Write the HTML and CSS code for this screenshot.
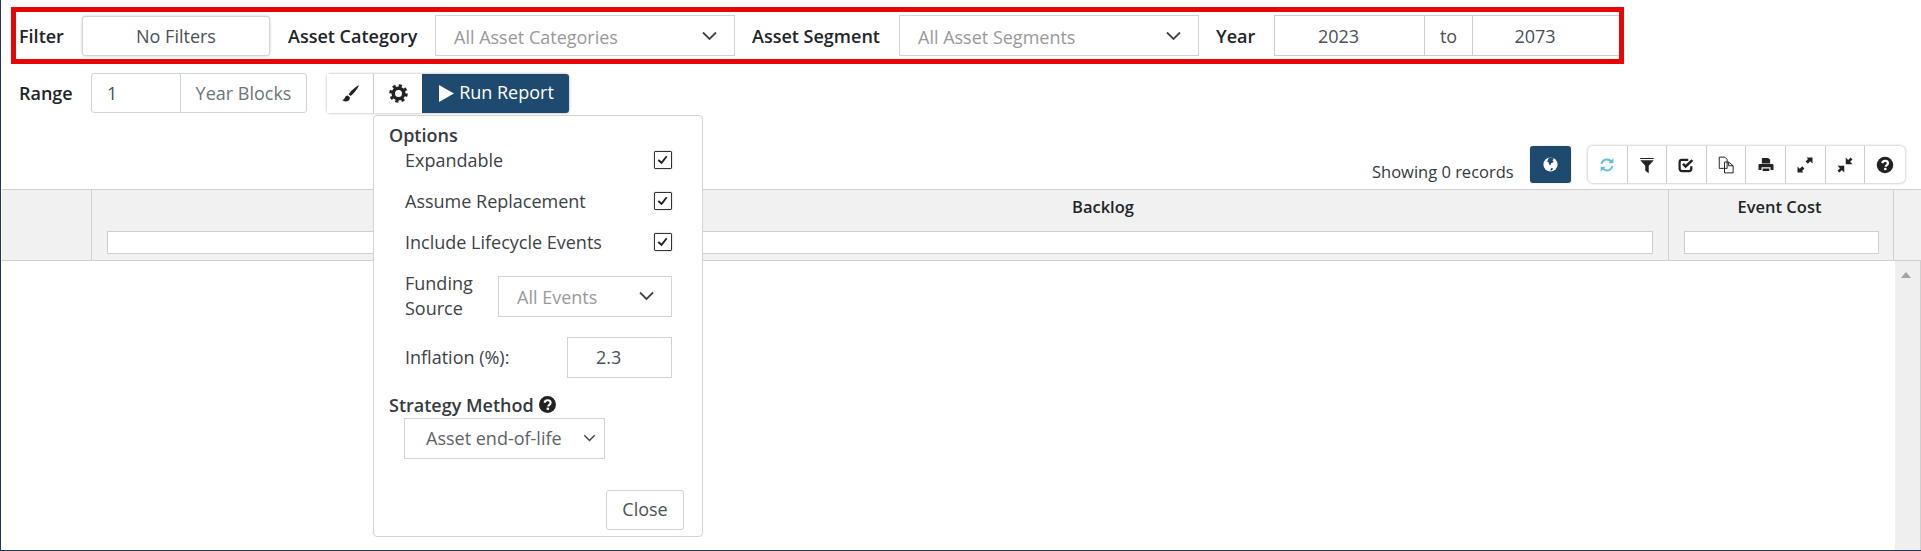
FILE: index.html
```html
<!DOCTYPE html>
<html lang="en">
<head>
<meta charset="utf-8">
<title>Report</title>
<link rel="stylesheet" href="styles.css">
</head>
<body>
<div class="page">
  <div class="filterbar">
    <span class="lbl lbl-filter">Filter</span>
    <button class="btn-filter">No Filters</button>
    <span class="lbl lbl-cat">Asset Category</span>
    <div class="select sel-wide"><span>All Asset Categories</span><svg class="chev" viewBox="0 0 16 10"><path d="M1.5 1.5 8 8l6.5-6.5"/></svg></div>
    <span class="lbl lbl-seg">Asset Segment</span>
    <div class="select sel-wide"><span>All Asset Segments</span><svg class="chev" viewBox="0 0 16 10"><path d="M1.5 1.5 8 8l6.5-6.5"/></svg></div>
    <span class="lbl lbl-year">Year</span>
    <div class="yeargroup">
      <div class="yearcell year-a">2023</div>
      <div class="yearcell year-to">to</div>
      <div class="yearcell year-b">2073</div>
    </div>
  </div>

  <div class="rangebar">
    <span class="lbl lbl-range">Range</span>
    <div class="rangegroup">
      <div class="rangeval">1</div>
      <div class="rangeunit">Year Blocks</div>
    </div>
    <div class="tools">
      <button class="tool tool-brush"><svg class="ico" viewBox="0 0 24 24"><path d="M21.500 2.500C19 3 12.500 9 9.800 12.800l2.300 2.100C15.500 12 21.500 5.200 21.500 2.500ZM8.600 14.200c-2.600.2-3 2.200-3.500 3.600-.3 1-1.400 1.500-2.600 1.600 1.600 1.800 5 2.200 7.200.8 1.600-1.100 2-3 1.300-4.200Z"/></svg></button>
      <button class="tool tool-cog"><svg class="ico" viewBox="0 0 24 24"><circle class="cog-ring" cx="12" cy="12" r="6"/><circle class="cog-teeth" cx="12" cy="12" r="8.600"/></svg></button>
      <button class="run"><svg class="play" viewBox="0 0 14 16"><path d="M0 0l14 8-14 8z"/></svg>Run Report</button>

      <div class="popup">
        <div class="pop-title">Options</div>
        <div class="check-row"><span>Expandable</span><span class="check"><svg viewBox="0 0 16 16"><path d="M3.500 8.500 7 11.500l5.500-7"/></svg></span></div>
        <div class="check-row"><span>Assume Replacement</span><span class="check"><svg viewBox="0 0 16 16"><path d="M3.500 8.500 7 11.500l5.500-7"/></svg></span></div>
        <div class="check-row"><span>Include Lifecycle Events</span><span class="check"><svg viewBox="0 0 16 16"><path d="M3.500 8.500 7 11.500l5.500-7"/></svg></span></div>
        <div class="fund-row">
          <span class="fund-lbl">Funding Source</span>
          <div class="select sel-fund"><span>All Events</span><svg class="chev" viewBox="0 0 16 10"><path d="M1.500 1.500 8 8l6.500-6.500"/></svg></div>
        </div>
        <div class="infl-row">
          <span>Inflation (%):</span>
          <div class="infl-input">2.3</div>
        </div>
        <div class="pop-title strat">Strategy Method
          <svg class="qmark" viewBox="0 0 24 24"><circle cx="12" cy="12" r="12"/><path class="qm" d="M7.800 9.500C8.300 7.200 10 6 12.200 6c2.400 0 4.200 1.500 4.200 3.600 0 3-3.300 3-3.300 5.200"/><rect class="qd" x="10.800" y="16.400" width="3.400" height="3.200"/></svg>
        </div>
        <div class="strat-sel"><span>Asset end-of-life</span><svg class="chev small" viewBox="0 0 16 10"><path d="M1.500 1.500 8 8l6.500-6.500"/></svg></div>
        <div class="pop-foot"><button class="close">Close</button></div>
      </div>
    </div>
  </div>

  <div class="statusbar">
    <span class="records">Showing 0 records</span>
    <button class="globe"><svg class="ico" viewBox="0 0 24 24"><circle class="globe-disc" cx="12" cy="12" r="10"/><path class="globe-land" d="M10 2.500h5.500l1 2-2 1.500 2 1.500-2 2.500H13l-1 3-2-1-.5-3-2-1 1-3.500ZM13 17l3 .5-2.500 2.800-2-.3Z"/></svg></button>
    <div class="toolbar">
      <button class="tb"><svg class="ico" viewBox="0 0 24 24"><path class="refresh" d="M4.800 10.500C5.800 6.700 8.800 4.700 12 4.700c2.300 0 4.200 1 5.700 2.500M19.200 13.500c-1 3.800-4 5.800-7.200 5.800-2.300 0-4.200-1-5.700-2.500"/><path class="refresh-fill" d="M20.500 3v6.800h-6.800ZM3.500 21v-6.800h6.800Z"/></svg></button>
      <button class="tb"><svg class="ico" viewBox="0 0 24 24"><path d="M3 2.500h18V4H3ZM3 5.500h18L14.300 13v10l-4.600-3.500V13Z"/></svg></button>
      <button class="tb"><svg class="ico" viewBox="0 0 24 24"><path class="tb-line" d="M19 13.500V17a3 3 0 0 1-3 3H6.500a3 3 0 0 1-3-3V8a3 3 0 0 1 3-3H15"/><path class="tb-check" d="M8 10.500l3.500 3.500 9-8.500"/></svg></button>
      <button class="tb"><svg class="ico" viewBox="0 0 24 24"><path class="tb-thin" d="M3 1.500h7.500l3 3v12H3ZM10 8h5.500l6 5v9.500H10V8M15.500 8v5h6"/></svg></button>
      <button class="tb"><svg class="ico" viewBox="0 0 24 24"><path d="M7 2.500h8l2.500 2.500v5H6.500V3ZM3.500 10.500h17A1.500 1.500 0 0 1 22 12v6.500h-4V15H6v3.500H2V12a1.500 1.500 0 0 1 1.500-1.500ZM7.500 16.500h9V20h-9Z"/></svg></button>
      <button class="tb"><svg class="ico" viewBox="0 0 24 24"><path d="M14 2h8v8l-3-3-3.200 3.200-3-3L16 4ZM10 22H2v-8l3 3 3.200-3.200 3 3L8 20Z"/></svg></button>
      <button class="tb"><svg class="ico" viewBox="0 0 24 24"><path d="M22 11h-9V2l3.200 3.200L19.500 2l2.500 2.500L18.800 7.800ZM2 13h9v9l-3.200-3.200L4.500 22 2 19.500l3.300-3.300Z"/></svg></button>
      <button class="tb"><svg class="ico" viewBox="0 0 24 24"><circle cx="12" cy="12" r="11"/><path class="qm" d="M8.300 9.500C8.800 7.500 10.200 6.500 12.200 6.500c2.100 0 3.700 1.300 3.700 3.100 0 2.700-2.900 2.600-2.900 4.800"/><rect class="qd" x="10.800" y="15.800" width="3.200" height="3"/></svg></button>
    </div>
  </div>

  <div class="thead">
    <div class="th"></div>
    <div class="th"><div class="th-title"></div><div class="th-input"></div></div>
    <div class="th"><div class="th-title">Backlog</div><div class="th-input"></div></div>
    <div class="th th-cost"><div class="th-title">Event Cost</div><div class="th-input"></div></div>
    <div class="th th-end"></div>
  </div>
  <div class="tbody">
    <div class="scroll"><span class="scroll-up"></span></div>
  </div>
</div>
</body>
</html>
```
FILE: styles.css
```css
* { box-sizing: border-box; }
html, body { margin: 0; padding: 0; background: #fff; }
body { font-family: "Open Sans", sans-serif; font-size: 18px; color: #212529; }
button { font: inherit; cursor: pointer; }

.page {
  height: 551px;
  display: flex;
  flex-direction: column;
  border-left: 1px solid #1c3a5e;
  border-bottom: 1px solid #1c3a5e;
  overflow: hidden;
}

.lbl { font-weight: 600; color: #212529; white-space: nowrap; }

.filterbar {
  margin: 7px 0 0 10px;
  width: 1613px;
  height: 57px;
  flex: none;
  border: 5px solid #e60606;
  padding: 0 0 0 4px;
  display: flex;
  align-items: center;
  overflow: hidden;
}
.filterbar > * { flex: none; }
.lbl-filter { width: 62px; margin-left: -1px; margin-right: 1px; }
.btn-filter {
  width: 188px; height: 40px;
  background: #fff;
  border: 1px solid #ced4da;
  border-radius: 3px;
  box-shadow: 0 0 3px rgba(0,0,0,.2);
  color: #495057;
  padding: 0;
}
.lbl-cat { margin-left: 18px; width: 147px; }
.lbl-seg { margin-left: 17px; width: 147px; }
.lbl-year { margin-left: 17px; width: 58px; }

.select {
  display: flex; align-items: center; justify-content: space-between;
  height: 41px;
  border: 1px solid #ced4da;
  color: #999;
  background: #fff;
}
.select span { padding-top: 2px; }
.sel-wide { width: 300px; padding: 0 16px 0 18px; }
.chev { width: 17px; height: 10px; fill: none; stroke: #444; stroke-width: 1.8; }
.chev.small { width: 13px; height: 8px; }

.yeargroup { display: flex; height: 41px; border-top: 1px solid #ccc; border-bottom: 1px solid #ccc; }
.yearcell { display: flex; align-items: center; justify-content: center; color: #495057; }
.year-a { width: 150px; padding-right: 22px; border-left: 1px solid #ccc; }
.year-to { width: 49px; border-left: 1px solid #ccc; border-right: 1px solid #ccc; }
.year-b { width: 146px; padding-right: 22px; }

.rangebar { display: flex; align-items: center; margin: 9px 0 0 19px; height: 40px; flex: none; }
.lbl-range { width: 71px; margin-left: -1px; margin-right: 1px; }
.rangegroup {
  display: flex; width: 216px; height: 40px;
  border: 1px solid #ced4da; border-radius: 3px;
  color: #495057;
}
.rangeval { width: 89px; padding-left: 15px; display: flex; align-items: center; border-right: 1px solid #ced4da; }
.rangeunit { flex: 1; display: flex; align-items: center; justify-content: center; color: #6c757d; }

.tools {
  position: relative;
  display: flex;
  margin-left: 20px;
  height: 39px;
  border-radius: 3px;
  box-shadow: 0 0 3px rgba(0,0,0,.35);
}
.tool {
  width: 47px; height: 39px; padding: 0;
  background: #fff; border: 0; border-right: 1px solid #ccc;
  display: flex; align-items: center; justify-content: center;
}
.tool-cog { width: 48px; border-right: 0; }
.ico { width: 18px; height: 18px; fill: #222; display: block; }
.tool .ico { width: 21px; height: 21px; }
.cog-ring { fill: none; stroke: #222; stroke-width: 4; }
.cog-teeth { fill: none; stroke: #222; stroke-width: 4; stroke-dasharray: 3.4 3.35; }
.run {
  width: 147px; height: 39px; padding: 0 0 2px 2px;
  background: #1f4a70; border: 0; border-radius: 0 3px 3px 0;
  color: #fff;
  display: flex; align-items: center; justify-content: center;
}
.play { width: 15px; height: 17px; fill: #fff; margin: 2px 5px 0 0; }

.popup {
  position: absolute;
  left: 46px; top: 41px;
  width: 330px; height: 422px;
  background: #fff;
  border: 1px solid #d4d4d4;
  border-radius: 4px;
  padding: 8px 17px 0 15px;
  color: #3c4248;
  z-index: 5;
}
.pop-title { font-weight: 600; color: #343a40; line-height: 22px; }
.check-row {
  display: flex; align-items: center; justify-content: space-between;
  height: 18px;
  margin: 0 13px 23px 16px;
}
.pop-title + .check-row { margin-top: 5px; }
.check {
  width: 18px; height: 18px; border: 1.5px solid #333; border-radius: 1px;
  box-shadow: 0 0 2px rgba(0,0,0,.3);
  display: block;
}
.check svg { display: block; width: 15px; height: 15px; fill: none; stroke: #222; stroke-width: 2; }
.fund-row { display: flex; align-items: center; margin: -3px 13px 0 16px; height: 51px; justify-content: space-between; }
.fund-lbl { width: 80px; line-height: 25px; }
.sel-fund { width: 174px; padding: 0 16px 0 18px; }
.infl-row { display: flex; align-items: center; justify-content: space-between; margin: 15px 13px 0 16px; height: 41px; }
.infl-input {
  width: 105px; height: 41px; padding-left: 28px;
  border: 1px solid #ced4da;
  display: flex; align-items: center;
  color: #495057;
}
.strat { margin-top: 16px; display: flex; align-items: center; }
.qmark { width: 17px; height: 17px; fill: #222; margin-left: 5px; }
.qm { fill: none; stroke: #fff; stroke-width: 3; }
.qd { fill: #fff; }
.strat-sel {
  width: 201px; height: 41px; margin: 2px 0 0 15px;
  border: 1px solid #ced4da;
  padding: 0 8px 0 21px;
  display: flex; align-items: center; justify-content: space-between;
  color: #5d6368;
}
.pop-foot { display: flex; justify-content: flex-end; margin: 31px 1px 0 0; }
.close {
  width: 78px; height: 40px; padding: 0 0 2px;
  background: #fff; border: 1px solid #ced4da; border-radius: 3px;
  color: #495057;
}

.statusbar {
  display: flex; align-items: flex-start;
  margin: 33px 0 6px 1371px;
  height: 37px; flex: none;
}
.records { width: 158px; margin-top: 15px; line-height: 22px; color: #343a40; font-size: 16.5px; }
.globe {
  width: 41px; height: 37px; padding: 0;
  background: #1f4a70; border: 0; border-radius: 3px;
  box-shadow: 0 0 2px rgba(0,0,0,.2);
  display: flex; align-items: center; justify-content: center;
}
.globe .ico { width: 17px; height: 17px; }
.globe-disc { fill: #fff; }
.globe-land { fill: #1f4a70; }
.toolbar {
  display: flex; margin-left: 17px; height: 37px;
  border-radius: 5px;
  box-shadow: 0 0 3px rgba(0,0,0,.35);
  background: #fff;
}
.tb {
  width: 39.6px; height: 37px; padding: 0;
  background: transparent; border: 0; border-right: 1px solid #ccc;
  display: flex; align-items: center; justify-content: center;
}
.tb:last-child { border-right: 0; }
.tb .ico { width: 18px; height: 18px; }
.refresh { fill: none; stroke: #5bc0de; stroke-width: 2.6; }
.refresh-fill { fill: #5bc0de; }
.tb-line { fill: none; stroke: #222; stroke-width: 3; }
.tb-check { fill: none; stroke: #222; stroke-width: 3.4; }
.tb-thin { fill: none; stroke: #222; stroke-width: 1.3; }

.thead {
  display: grid;
  grid-template-columns: 90px 446px 1131px 225px 1fr;
  height: 72px; flex: none;
  margin-left: 1px;
  background: #f1f1f1;
  border-top: 1px solid #cfcfcf;
  border-bottom: 1px solid #cfcfcf;
}
.th { border-right: 1px solid #cfcfcf; display: flex; flex-direction: column; padding: 0 15px; }
.th-cost { padding-right: 14px; }
.th-cost .th-title { padding-right: 4px; }
.th-end { border-right: 0; }
.th-title { height: 41px; line-height: 33px; font-weight: 600; font-size: 16.5px; text-align: center; color: #212529; }
.th-input { height: 23px; background: #fff; border: 1px solid #cfcfcf; }

.tbody { flex: 1; display: flex; justify-content: flex-end; margin-left: 1px; }
.scroll { width: 26px; background: #efefef; border-right: 1px solid #cfcfcf; padding: 11px 0 0 6px; }
.scroll-up {
  display: block; width: 0; height: 0;
  border-left: 5.500px solid transparent; border-right: 5.500px solid transparent;
  border-bottom: 6px solid #a3a3a3;
}
```
